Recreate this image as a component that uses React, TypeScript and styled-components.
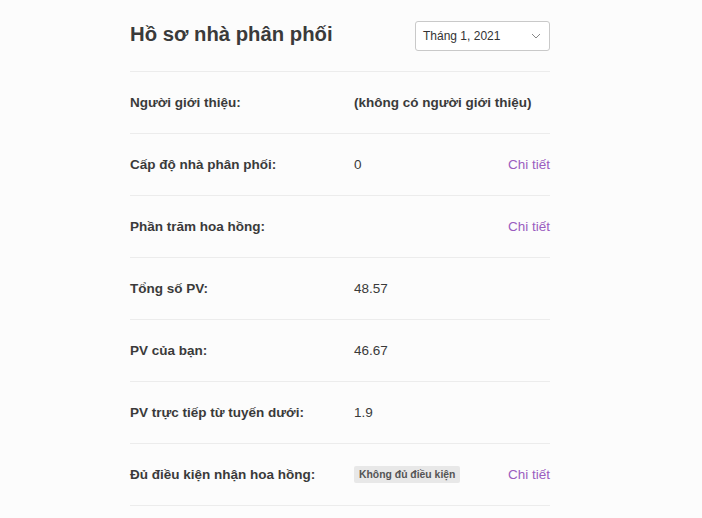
import React from "react";
import styled, { createGlobalStyle } from "styled-components";

const GlobalStyle = createGlobalStyle`
    body {
        margin: 0;
        background: #fcfcfc;
        font-family: "Liberation Sans", Arial, sans-serif;
        color: #333;
    }
`

const Page = styled.div`
    width: 420px;
    margin: 0 auto 0 130px;
`

const Header = styled.div`
    display: flex;
    align-items: center;
    justify-content: space-between;
    height: 71px;
    border-bottom: 1px solid #ececec;
`

const Title = styled.h1`
    margin: 0 0 2px;
    font-size: 20.3px;
    font-weight: bold;
    color: #3a3a3a;
`

const Select = styled.div`
    display: flex;
    align-items: center;
    justify-content: space-between;
    box-sizing: border-box;
    width: 135px;
    height: 30px;
    padding: 0 8px 0 7px;
    border: 1px solid #c9c9c9;
    border-radius: 3px;
    background: #fff;
    font-size: 12px;
    color: #333;
`

const Row = styled.div`
    display: flex;
    align-items: center;
    height: 61px;
    border-bottom: 1px solid #ececec;
    font-size: 13.5px;
`

const Label = styled.div`
    width: 224px;
    font-weight: bold;
    color: #3a3a3a;
`

const Value = styled.div<{ $bold?: boolean }>`
    flex: 1;
    font-weight: ${p => (p.$bold ? "bold" : "normal")};
    color: #3a3a3a;
`

const Badge = styled.span`
    display: inline-block;
    padding: 3px 5px;
    background: #e8e8e8;
    border-radius: 2px;
    font-size: 10.4px;
    font-weight: bold;
    color: #555;
`

const Detail = styled.a`
    color: #9a5cc0;
    font-size: 13.5px;
    text-decoration: none;
`

const rows = [
    { label: "Người giới thiệu:", value: "(không có người giới thiệu)", bold: true },
    { label: "Cấp độ nhà phân phối:", value: "0", detail: true },
    { label: "Phần trăm hoa hồng:", value: "", detail: true },
    { label: "Tổng số PV:", value: "48.57" },
    { label: "PV của bạn:", value: "46.67" },
    { label: "PV trực tiếp từ tuyến dưới:", value: "1.9" },
    { label: "Đủ điều kiện nhận hoa hồng:", badge: "Không đủ điều kiện", detail: true },
]

export default function App() {
    return (
        <>
            <GlobalStyle />
            <Page>
                <Header>
                    <Title>Hồ sơ nhà phân phối</Title>
                    <Select>
                        <span>Tháng 1, 2021</span>
                        <svg width="10" height="6" viewBox="0 0 10 6">
                            <path d="M1 1l4 4 4-4" fill="none" stroke="#888" strokeWidth="1" />
                        </svg>
                    </Select>
                </Header>
                {rows.map(r => (
                    <Row key={r.label}>
                        <Label>{r.label}</Label>
                        <Value $bold={r.bold}>
                            {r.badge ? <Badge>{r.badge}</Badge> : r.value}
                        </Value>
                        {r.detail && <Detail href="#">Chi tiết</Detail>}
                    </Row>
                ))}
            </Page>
        </>
    )
}
